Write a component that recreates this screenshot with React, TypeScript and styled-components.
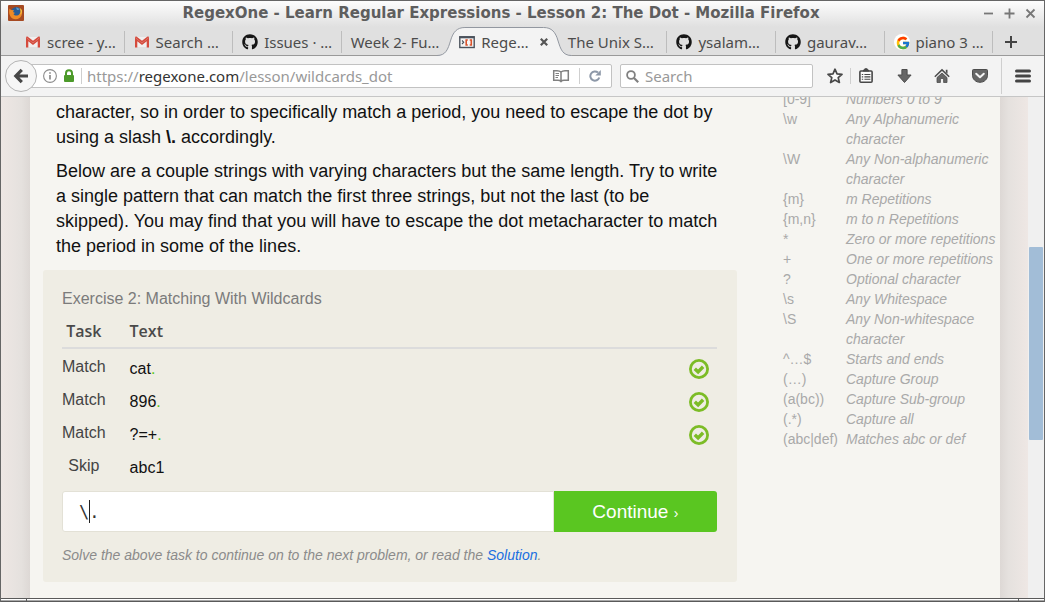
import React from "react";
import styled, { createGlobalStyle, css } from "styled-components";
import { FaGithub } from "react-icons/fa6";
import { FcGoogle } from "react-icons/fc";

const sans = `"Liberation Sans", Arial, sans-serif`;
const ui = `"Noto Sans", "Open Sans", sans-serif`;

const GlobalStyle = createGlobalStyle`
  *, *::before, *::after { box-sizing: border-box; }
  body { margin: 0; font-family: ${sans}; }
  button, input { font: inherit; border: 0; padding: 0; background: none; color: inherit; }
  svg { display: block; flex: none; }
`;

/* ---------- window frame ---------- */

const Window = styled.div`
  display: flex;
  flex-direction: column;
  height: 100vh;
  overflow: hidden;
  border: 1px solid #666;
  border-bottom: 0;
  background: #f3f3f3;
`;

const TitleBar = styled.header`
  display: grid;
  grid-template-columns: 28px 1fr 70px;
  align-items: center;
  height: 26px;
  flex: none;
  padding: 0 8px 2px 7px;
  background: linear-gradient(#fdfdfd, #e0e0e0);
`;

const WindowTitle = styled.h1`
  margin: 0;
  text-align: center;
  white-space: nowrap;
  font: bold 15px/20px "DejaVu Sans", sans-serif;
  color: #5e5e5e;
`;

const WindowButtons = styled.div`
  display: flex;
  justify-content: flex-end;
  gap: 10px;
`;

const IconButton = styled.button`
  display: grid;
  place-items: center;
  flex: none;
  cursor: pointer;
`;

const StatusEdge = styled.div`
  display: flex;
  flex: none;
  height: 4px;
  margin: 0 -1px;
  border-top: 1px solid #5a5a5a;
  border-bottom: 1px solid #5a5a5a;
  background: linear-gradient(#fff 50%, #a8a8a8 50%);
  justify-content: space-between;
  padding: 0 26px;

  &::before,
  &::after {
    content: "";
    width: 1px;
    background: #5a5a5a;
  }
`;

/* ---------- tabs ---------- */

const TabStrip = styled.nav`
  display: flex;
  align-items: stretch;
  flex: none;
  height: 29px;
  padding-left: 15px;
  border-bottom: 1px solid #9a9a9a;
  background: #e0e0e0;
`;

const Tab = styled.button<{ $active?: boolean; $divider?: boolean }>`
  position: relative;
  display: flex;
  align-items: center;
  gap: 6px;
  flex: 1;
  min-width: 0;
  padding: 1px 0 0 9px;
  white-space: nowrap;
  text-align: left;
  font: 15px/20px ${ui};
  color: #4c4c4c;
  cursor: pointer;

  > * { position: relative; }

  ${(p) =>
    p.$divider &&
    css`
      &::after {
        content: "";
        position: absolute;
        right: 0;
        top: 4px;
        bottom: 2px;
        width: 1px;
        background: #bdbdbd;
      }
    `}
  ${(p) => p.$active && css`z-index: 1;`}
`;

const TabShape = styled.svg`
  && {
    position: absolute;
    left: -13px;
    top: 0;
    width: calc(100% + 26px);
    height: 29px;
  }
`;

const TabClose = styled.span`
  margin-left: auto;
  padding-right: 11px;
`;

const NewTab = styled(IconButton)`
  width: 36px;
  margin-right: 15px;
  padding-top: 2px;
`;

/* ---------- toolbar ---------- */

const Toolbar = styled.div`
  display: flex;
  align-items: center;
  flex: none;
  height: 41px;
  padding: 0 12px 0 4px;
  border-bottom: 1px solid #c6c6c6;
  background: #f3f3f3;
`;

const BackButton = styled(IconButton)`
  position: relative;
  z-index: 1;
  width: 32px;
  height: 32px;
  border: 1px solid #b4b4b4;
  border-radius: 50%;
  background: #f6f6f6;
`;

const Field = styled.div`
  display: flex;
  align-items: center;
  height: 24px;
  border: 1px solid #c2c2c2;
  border-radius: 2px;
  background: #fff;
  font: 15px/20px ${ui};
  color: #999;
`;

const UrlField = styled(Field)`
  flex: 1;
  gap: 6px;
  margin-left: -12px;
  padding: 0 10px 0 17px;
  b { font-weight: 400; color: #333; }
`;

const UrlText = styled.div`
  flex: 1;
  margin-left: -1px;
  white-space: nowrap;
  outline: 0;
`;

const PageActions = styled.div`
  display: flex;
  align-items: center;
  gap: 9px;
`;

const SearchField = styled(Field).attrs({ as: "label" })`
  width: 193px;
  margin: 0 13px 0 8px;
  padding: 0 5px;
  gap: 6px;
  input { flex: 1; min-width: 0; outline: 0; }
  input::placeholder { color: #999; opacity: 1; }
`;

const Divider = styled.span<{ $h?: number }>`
  flex: none;
  width: 1px;
  height: ${(p) => p.$h ?? 16}px;
  background: #cfcfcf;
`;

const ToolButton = styled(IconButton)`
  width: 18px;
  height: 24px;
`;

const Tools = styled.div`
  display: flex;
  align-items: center;
  gap: 20px;
`;

const StarGroup = styled.div`
  display: flex;
  align-items: center;
  gap: 6px;
`;

const MenuGroup = styled.div`
  display: flex;
  align-items: center;
  gap: 12px;
  margin-left: -8px;
`;

/* ---------- page ---------- */

const Viewport = styled.div`
  display: flex;
  flex: 1;
  min-height: 0;
  overflow: hidden;
`;

const Margin = styled.div<{ $side: "left" | "right" }>`
  flex: none;
  width: ${(p) => (p.$side === "left" ? 29 : 28)}px;
  background: linear-gradient(to ${(p) => p.$side}, #ddd8d5, #e5e1de 30%, #eee7e4);
`;

const Page = styled.main`
  display: grid;
  grid-template-columns: minmax(0, 1fr) 217px;
  gap: 46px;
  flex: 1;
  min-width: 0;
  padding-left: 13px;
  background: #f6f5f1;
`;

const Scrollbar = styled.div`
  flex: none;
  width: 16px;
  padding: 150px 1px 0;
  background: #f0f0f0;
`;

const Thumb = styled.div`
  height: 193px;
  border-radius: 1px;
  background: #a2bdd7;
`;

const Lesson = styled.article`
  padding-top: 3px;
`;

const Paragraph = styled.p`
  margin: 0 0 9px;
  padding: 0 10px 0 13px;
  font-size: 18px;
  line-height: 25px;
  color: #111;
`;

const Exercise = styled.section`
  margin-top: 11px;
  padding: 19px 20px 17px 19px;
  border-radius: 3px;
  background: #efede4;
`;

const ExerciseTitle = styled.h2`
  margin: 0 0 10px;
  font-size: 16px;
  font-weight: 400;
  line-height: 20px;
  color: #7b7b7b;
`;

const TaskTable = styled.table`
  width: 100%;
  border-collapse: collapse;
  font-size: 16px;
  line-height: 20px;
  color: #111;

  th {
    padding: 2px 0 6px;
    border-bottom: 2px solid #dcdcdc;
    text-align: left;
    font: 600 16px/20px "Open Sans", "Noto Sans", sans-serif;
    color: #4a4a4a;
  }
  td { height: 33px; padding: 4px 0 0; }
  th:first-child, td:first-child {
    width: 67px;
    padding-right: 24px;
    text-align: center;
  }
  td:first-child { padding-top: 0; color: #444; }
  td:last-child { width: 28px; }
  td:last-child svg { width: 20px; height: 20px; }
  tbody tr:first-child td { height: 35px; padding-top: 6px; }
  tbody tr:first-child td:first-child { padding-top: 2px; }
`;

const Hit = styled.span`
  color: #5ac621;
`;

const AnswerForm = styled.form`
  display: flex;
  height: 41px;
  margin-top: 9px;
`;

const AnswerBox = styled.label`
  position: relative;
  flex: 3;
  border: 1px solid #e3e1d6;
  border-radius: 3px 0 0 3px;
  background: #fff;
  font: 17px/39px "DejaVu Sans Mono", monospace;
  color: #333;

  input {
    width: 100%;
    height: 100%;
    padding-left: 16px;
    outline: 0;
  }
`;

const Caret = styled.span`
  position: absolute;
  left: calc(16px + 1ch);
  top: 8px;
  width: 1px;
  height: 23px;
  background: #222;
`;

const Continue = styled.button`
  flex: 1;
  border-radius: 0 3px 3px 0;
  background: #5ac621;
  color: #fff;
  font-size: 19px;
  cursor: pointer;
  small { font-size: 14px; }
`;

const Hint = styled.p`
  margin: 13px 0 0;
  font-size: 14px;
  font-style: italic;
  line-height: 20px;
  color: #8b8b8b;
  a { color: #1a6fe0; text-decoration: none; }
`;

const Reference = styled.table`
  width: 100%;
  height: max-content;
  margin-top: -8px;
  border-collapse: collapse;
  font-size: 14px;
  line-height: 20px;
  color: #a9a9a9;

  th, td { padding: 0; text-align: left; vertical-align: top; font-weight: 400; }
  th { width: 63px; white-space: nowrap; }
  td { font-style: italic; }
`;

/* ---------- icons ---------- */

const FirefoxIcon = () => (
  <svg width="16" height="16" viewBox="0 0 16 16">
    <rect width="16" height="16" rx="1" fill="#a64a22" />
    <circle cx="8.5" cy="7.5" r="5.5" fill="#2a5d96" />
    <path d="M8 2.5c2 0 3 1 3.500 2.200L9 5z" fill="#5f9cc9" />
    <path d="M1.500 3.500 3 5l3 .3-1 1.700 2 1-1.500 1c1 2 4.500 2 6 0 1.200-1.500 1.200-4 0-6 3.500 2 3.500 7.500 0 10-3 2.200-7.500 1.500-9.300-2C.8 8.500 1 5.500 1.500 3.500z" fill="#f08a24" />
    <path d="M11.500 3c1.500 2 1.800 4.500.5 6.500 1.500-.5 2-2 2-3.500 0-1.200-1.200-2.500-2.500-3z" fill="#f7c23c" />
  </svg>
);

const GmailIcon = () => (
  <svg width="16" height="16" viewBox="0 0 16 16">
    <path d="M2 3h12v10H2z" fill="#f1efef" />
    <path d="M1 13.500V3.500L8 9l7-5.500v10h-2.300V7.300L8 11 3.300 7.300v6.200z" fill="#d54b3d" />
    <path d="M1 3.500C1 2.500 2 2.200 2.800 2.800L8 6.800l5.200-4c.8-.6 1.800-.3 1.800.7L8 9z" fill="#d54b3d" />
  </svg>
);

const GoogleIcon = () => (
  <svg width="16" height="16" viewBox="0 0 16 16">
    <circle cx="8" cy="8" r="8" fill="#fff" />
    <FcGoogle x="1.500" y="1.500" width="13" height="13" />
  </svg>
);

const RegexOneIcon = () => (
  <svg width="16" height="16" viewBox="0 0 16 16" fill="none">
    <rect x=".8" y="2.800" width="14.400" height="10.700" fill="#f6f6f6" stroke="#4b525c" strokeWidth="1.400" />
    <path d="M.5 3.300h15" stroke="#4b525c" strokeWidth="2" />
    <path d="m3 6.500 1.700 1.700L3 10" stroke="#4b525c" strokeWidth="1.100" />
    <path d="M8.800 6H7.200v5h1.600M10.700 6h1.600v5h-1.600" stroke="#d9532c" strokeWidth="1.600" />
  </svg>
);

const CrossIcon = () => (
  <svg width="8" height="8" viewBox="0 0 8 8" stroke="#555" strokeWidth="2.200">
    <path d="m.8.8 6.400 6.400M7.200.8.8 7.200" />
  </svg>
);

const PlusIcon = () => (
  <svg width="12" height="12" viewBox="0 0 12 12" stroke="#444" strokeWidth="2">
    <path d="M6 0v12M0 6h12" />
  </svg>
);

const frameGlyphs = {
  Minimize: "M1 5.500h9",
  Maximize: "M5.500.5v10M.5 5.500h10",
  Close: "m1.500 1.500 8 8m0-8-8 8",
};

const BackIcon = () => (
  <svg width="16" height="16" viewBox="0 0 16 16" fill="none" stroke="#474747" strokeWidth="3.200">
    <path d="M8.800 1.800 2.800 8l6 6.200M3 8h12" />
  </svg>
);

const InfoIcon = () => (
  <svg width="14" height="14" viewBox="0 0 14 14" fill="none" stroke="#8c8c8c">
    <circle cx="7" cy="7" r="6.400" strokeWidth="1.100" />
    <path d="M7 6v4.500M7 3.200v1.600" strokeWidth="1.700" />
  </svg>
);

const LockIcon = () => (
  <svg width="12" height="14" viewBox="0 0 12 14">
    <path d="M3 7V4.200a3 3 0 0 1 6 0V7" fill="none" stroke="#4c9a2a" strokeWidth="2" />
    <rect x="1" y="6" width="10" height="7" rx="1" fill="#4c9a2a" />
  </svg>
);

const ReaderIcon = () => (
  <svg width="18" height="14" viewBox="0 0 18 14" fill="none" stroke="#808080">
    <path d="M9 3C8 2 6.500 1.700 5 1.700H1.700v9.600H6c1.300 0 2.300.3 3 1.200.7-.9 1.700-1.200 3-1.200h4.300V1.700H13c-1.500 0-3 .3-4 1.300zM9 3v9" strokeWidth="1.500" />
    <path d="M3.500 4.500H7M3.500 6.500H7M3.500 8.500H6" />
  </svg>
);

const ReloadIcon = () => (
  <svg width="12" height="12" viewBox="0 0 12 12">
    <path d="M10.300 7.500A4.600 4.600 0 1 1 9 2.600" fill="none" stroke="#8d98a8" strokeWidth="2" />
    <path d="M11.800 0v5.400H6.300z" fill="#8d98a8" />
  </svg>
);

const SearchIcon = () => (
  <svg width="13" height="13" viewBox="0 0 13 13" fill="none" stroke="#808080">
    <circle cx="5" cy="5" r="3.900" strokeWidth="1.800" />
    <path d="m8 8 4.200 4.200" strokeWidth="2.200" />
  </svg>
);

const StarIcon = () => (
  <svg width="16" height="16" viewBox="0 0 16 16" fill="#fbfbfb" stroke="#484848" strokeWidth="1.700" strokeLinejoin="round">
    <path d="m8 1.200 2 4.600 5 .5-3.800 3.300 1.200 4.900L8 11.900l-4.400 2.600 1.200-4.900L1 6.300l5-.5z" />
  </svg>
);

const ClipboardIcon = () => (
  <svg width="14" height="16" viewBox="0 0 14 16" fill="none" stroke="#484848">
    <rect x=".9" y="3" width="12.200" height="11.200" rx="1" fill="#fbfbfb" strokeWidth="1.600" />
    <path d="M4 3 5.800.8h2.400L10 3z" fill="#484848" />
    <path d="M2.800 6.500h1.400M5.400 6.500h6M2.800 8.900h1.400M5.400 8.900h6M2.800 11.300h1.400M5.400 11.300h6" strokeWidth="1.100" />
  </svg>
);

const DownloadIcon = () => (
  <svg width="15" height="16" viewBox="0 0 15 16">
    <path d="M4.900 1.500h5.200V7h4L7.500 14.500.9 7h4z" fill="#666" stroke="#4c4c4c" />
  </svg>
);

const HomeIcon = () => (
  <svg width="16" height="16" viewBox="0 0 16 16">
    <path d="M.8 8.700 8 1.900l7.200 6.800" fill="none" stroke="#4c4c4c" strokeWidth="1.500" />
    <path d="M11.800 1.800h1.700v4l-1.700-1.600z" fill="#4c4c4c" />
    <path d="M3 9.600 8 5l5 4.600v4.900H9.600v-4H6.400v4H3z" fill="#666" stroke="#4c4c4c" strokeWidth=".8" />
  </svg>
);

const PocketIcon = () => (
  <svg width="16" height="16" viewBox="0 0 16 16">
    <path d="M1.500 1.500h13q1 0 1 1v4.800c0 4-3.300 7-7.500 7s-7.500-3-7.500-7V2.500q0-1 1-1z" fill="#666" stroke="#4c4c4c" />
    <path d="m4.200 5.700 3.800 3.600 3.800-3.600" fill="none" stroke="#f3f3f3" strokeWidth="2" strokeLinecap="round" strokeLinejoin="round" />
  </svg>
);

const MenuIcon = () => (
  <svg width="16" height="14" viewBox="0 0 16 14" stroke="#444" strokeWidth="3" strokeLinecap="round">
    <path d="M1.500 2h13M1.500 7h13M1.500 12h13" />
  </svg>
);

const CheckIcon = () => (
  <svg viewBox="0 0 20 20" fill="none" stroke="#7cbc26" role="img" aria-label="Matched">
    <circle cx="10" cy="10" r="8.600" strokeWidth="2.800" />
    <path d="m5.800 9.700 3.300 3.200 5-5.200" strokeWidth="3.400" />
  </svg>
);

/* ---------- data ---------- */

const github = <FaGithub size={16} color="#161616" />;

const tabs: { label: string; icon?: React.ReactNode; active?: boolean; divider?: boolean }[] = [
  { label: "scree - y…", icon: <GmailIcon />, divider: true },
  { label: "Search …", icon: <GmailIcon />, divider: true },
  { label: "Issues · …", icon: github, divider: true },
  { label: "Week 2- Fu…" },
  { label: "Rege…", icon: <RegexOneIcon />, active: true },
  { label: "The Unix S…", divider: true },
  { label: "ysalam…", icon: github, divider: true },
  { label: "gaurav…", icon: github, divider: true },
  { label: "piano 3 …", icon: <GoogleIcon />, divider: true },
];

const tasks = [
  { task: "Match", text: "cat", hit: "." },
  { task: "Match", text: "896", hit: "." },
  { task: "Match", text: "?=+", hit: "." },
  { task: "Skip", text: "abc1", hit: "" },
];

const reference = [
  ["[0-9]", "Numbers 0 to 9"],
  ["\\w", "Any Alphanumeric character"],
  ["\\W", "Any Non-alphanumeric character"],
  ["{m}", "m Repetitions"],
  ["{m,n}", "m to n Repetitions"],
  ["*", "Zero or more repetitions"],
  ["+", "One or more repetitions"],
  ["?", "Optional character"],
  ["\\s", "Any Whitespace"],
  ["\\S", "Any Non-whitespace character"],
  ["^…$", "Starts and ends"],
  ["(…)", "Capture Group"],
  ["(a(bc))", "Capture Sub-group"],
  ["(.*)", "Capture all"],
  ["(abc|def)", "Matches abc or def"],
];

const tools: [string, React.ReactNode][] = [
  ["Downloads", <DownloadIcon />],
  ["Home", <HomeIcon />],
  ["Pocket", <PocketIcon />],
];

export default function App() {
  return (
    <Window>
      <GlobalStyle />
      <TitleBar>
        <FirefoxIcon />
        <WindowTitle>RegexOne - Learn Regular Expressions - Lesson 2: The Dot - Mozilla Firefox</WindowTitle>
        <WindowButtons>
          {Object.entries(frameGlyphs).map(([name, d]) => (
            <IconButton key={name} aria-label={name}>
              <svg width="11" height="11" viewBox="0 0 11 11" stroke="#777" strokeWidth="1.800">
                <path d={d} />
              </svg>
            </IconButton>
          ))}
        </WindowButtons>
      </TitleBar>

      <TabStrip>
        {tabs.map((t) => (
          <Tab key={t.label} $active={t.active} $divider={t.divider}>
            {t.active && (
              <TabShape viewBox="0 0 135 29" preserveAspectRatio="none">
                <path d="M0 28.500C9 28.500 11 22 13.500 14C16 5 20 .5 28 .5h79c8 0 12 4.500 14.500 13.500C124 22 126 28.500 135 28.500V29H0z" fill="#f3f3f3" />
                <path d="M0 28.500C9 28.500 11 22 13.500 14C16 5 20 .5 28 .5h79c8 0 12 4.500 14.500 13.500C124 22 126 28.500 135 28.500" fill="none" stroke="#9297a0" />
              </TabShape>
            )}
            {t.icon}
            <span>{t.label}</span>
            {t.active && (
              <TabClose>
                <CrossIcon />
              </TabClose>
            )}
          </Tab>
        ))}
        <NewTab aria-label="New tab">
          <PlusIcon />
        </NewTab>
      </TabStrip>

      <Toolbar>
        <BackButton aria-label="Back">
          <BackIcon />
        </BackButton>
        <UrlField>
          <InfoIcon />
          <LockIcon />
          <Divider />
          <UrlText role="textbox" aria-label="Address" contentEditable suppressContentEditableWarning spellCheck={false}>
            https://<b>regexone.com</b>/lesson/wildcards_dot
          </UrlText>
          <PageActions>
            <ReaderIcon />
            <Divider />
            <IconButton aria-label="Reload">
              <ReloadIcon />
            </IconButton>
          </PageActions>
        </UrlField>
        <SearchField>
          <SearchIcon />
          <input type="text" placeholder="Search" aria-label="Search" />
        </SearchField>
        <Tools>
          <StarGroup>
            <ToolButton aria-label="Bookmark this page"><StarIcon /></ToolButton>
            <Divider />
            <ToolButton aria-label="Show bookmarks"><ClipboardIcon /></ToolButton>
          </StarGroup>
          {tools.map(([name, icon]) => (
            <ToolButton key={name} aria-label={name}>{icon}</ToolButton>
          ))}
          <MenuGroup>
            <Divider $h={36} />
            <ToolButton aria-label="Menu"><MenuIcon /></ToolButton>
          </MenuGroup>
        </Tools>
      </Toolbar>

      <Viewport>
        <Margin $side="left" />
        <Page>
          <Lesson>
            <Paragraph>
              character, so in order to specifically match a period, you need to escape the dot by
              using a slash <b>\.</b> accordingly.
            </Paragraph>
            <Paragraph>
              Below are a couple strings with varying characters but the same length. Try to write
              a single pattern that can match the first three strings, but not the last (to be
              skipped). You may find that you will have to escape the dot metacharacter to match
              the period in some of the lines.
            </Paragraph>
            <Exercise>
              <ExerciseTitle>Exercise 2: Matching With Wildcards</ExerciseTitle>
              <TaskTable>
                <thead>
                  <tr>
                    <th>Task</th>
                    <th>Text</th>
                    <th />
                  </tr>
                </thead>
                <tbody>
                  {tasks.map((t) => (
                    <tr key={t.text}>
                      <td>{t.task}</td>
                      <td>
                        {t.text}
                        <Hit>{t.hit}</Hit>
                      </td>
                      <td>{t.hit && <CheckIcon />}</td>
                    </tr>
                  ))}
                </tbody>
              </TaskTable>
              <AnswerForm onSubmit={(e) => e.preventDefault()}>
                <AnswerBox>
                  <input type="text" defaultValue="\." aria-label="Pattern" />
                  <Caret />
                </AnswerBox>
                <Continue type="submit">
                  Continue <small>›</small>
                </Continue>
              </AnswerForm>
              <Hint>
                Solve the above task to continue on to the next problem, or read the <a href="#solution">Solution</a>.
              </Hint>
            </Exercise>
          </Lesson>
          <Reference>
            <tbody>
              {reference.map(([symbol, meaning]) => (
                <tr key={symbol}>
                  <th scope="row">{symbol}</th>
                  <td>{meaning}</td>
                </tr>
              ))}
            </tbody>
          </Reference>
        </Page>
        <Margin $side="right" />
        <Scrollbar>
          <Thumb />
        </Scrollbar>
      </Viewport>
      <StatusEdge />
    </Window>
  );
}
